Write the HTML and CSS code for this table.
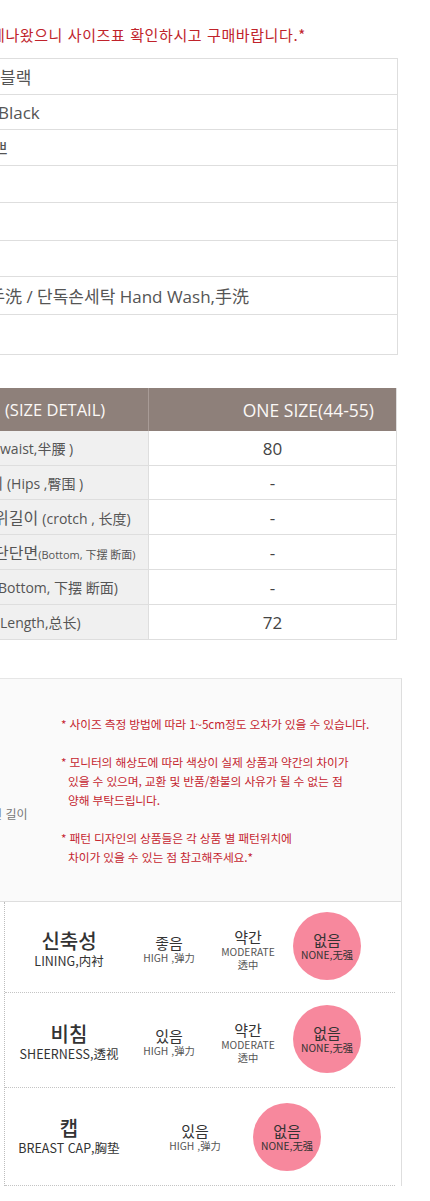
FILE: index.html
```html
<!DOCTYPE html>
<html lang="ko">
<head>
<meta charset="utf-8">
<title>Size detail</title>
<link rel="stylesheet" href="styles.css">
</head>
<body>
<div class="page">
  <p class="warn">게나왔으니 사이즈표 확인하시고 구매바랍니다.*</p>

  <div class="info">
    <div class="info-row"><span>블랙</span></div>
    <div class="info-row"><span class="cut2">Black</span></div>
    <div class="info-row"><span class="cut-big">쁘</span></div>
    <div class="info-row"></div>
    <div class="info-row"></div>
    <div class="info-row"></div>
    <div class="info-row"><span class="cut-wash">手洗 / 단독손세탁 Hand Wash,手洗</span></div>
    <div class="info-row"></div>
  </div>

  <div class="size">
    <div class="size-head">
      <div class="sh-left">(SIZE DETAIL)</div>
      <div class="sh-right">ONE SIZE(44-55)</div>
    </div>
    <div class="size-row">
      <div class="sr-left"><span class="t14">waist,半腰 )</span></div>
      <div class="sr-val">80</div>
    </div>
    <div class="size-row">
      <div class="sr-left"><span class="ko-cut k15">레</span> <span class="t14">(Hips ,臀围 )</span></div>
      <div class="sr-val">-</div>
    </div>
    <div class="size-row">
      <div class="sr-left"><span class="ko-cut">위</span><span class="k16">길이</span> <span class="t14">(crotch , 长度)</span></div>
      <div class="sr-val">-</div>
    </div>
    <div class="size-row">
      <div class="sr-left"><span class="ko-cut">단</span><span class="k16">단면</span><span class="t11">(Bottom, 下摆 断面)</span></div>
      <div class="sr-val">-</div>
    </div>
    <div class="size-row">
      <div class="sr-left"><span class="t14 cut-b">Bottom, 下摆 断面)</span></div>
      <div class="sr-val">-</div>
    </div>
    <div class="size-row">
      <div class="sr-left"><span class="t14">Length,总长)</span></div>
      <div class="sr-val">72</div>
    </div>
  </div>

  <div class="guide">
    <div class="notice">
      <div class="notice-side"><span class="side-label">선 길이</span></div>
      <div class="notes">
        <p>* 사이즈 측정 방법에 따라 1~5cm정도 오차가 있을 수 있습니다.</p>
        <p>* 모니터의 해상도에 따라 색상이 실제 상품과 약간의 차이가<br><span class="ind">있을 수 있으며, 교환 및 반품/환불의 사유가 될 수 없는 점</span><br><span class="ind">양해 부탁드립니다.</span></p>
        <p>* 패턴 디자인의 상품들은 각 상품 별 패턴위치에<br><span class="ind">차이가 있을 수 있는 점 참고해주세요.*</span></p>
      </div>
    </div>

    <div class="rating">
      <div class="rating-body">
        <div class="rate-row r1">
          <div class="label"><div class="l-ko">신축성</div><div class="l-en">LINING,内衬</div></div>
          <div class="opt"><div class="o-ko">좋음</div><div class="o-en">HIGH ,弹力</div></div>
          <div class="opt"><div class="o-ko">약간</div><div class="o-en">MODERATE</div><div class="o-en">透中</div></div>
          <div class="opt"><div class="dot"><div class="o-ko">없음</div><div class="o-en">NONE,无强</div></div></div>
        </div>
        <div class="rate-row r2">
          <div class="label"><div class="l-ko">비침</div><div class="l-en">SHEERNESS,透视</div></div>
          <div class="opt"><div class="o-ko">있음</div><div class="o-en">HIGH ,弹力</div></div>
          <div class="opt"><div class="o-ko">약간</div><div class="o-en">MODERATE</div><div class="o-en">透中</div></div>
          <div class="opt"><div class="dot"><div class="o-ko">없음</div><div class="o-en">NONE,无强</div></div></div>
        </div>
        <div class="rate-row r3">
          <div class="label"><div class="l-ko">캡</div><div class="l-en">BREAST CAP,胸垫</div></div>
          <div class="opt opt-wide"><div class="o-ko">있음</div><div class="o-en">HIGH ,弹力</div></div>
          <div class="opt"><div class="dot"><div class="o-ko">없음</div><div class="o-en">NONE,无强</div></div></div>
        </div>
      </div>
    </div>
  </div>
</div>
</body>
</html>
```

FILE: styles.css
```css
* { box-sizing: border-box; }

html, body {
  margin: 0;
  padding: 0;
  background: #fff;
}

body {
  font-family: "Noto Sans CJK KR", sans-serif;
  color: #333;
}

.page {
  width: 430px;
  overflow: hidden;
  padding-bottom: 20px;
}

/* top warning */
.warn {
  margin: 25px 0 0;
  font-size: 15px;
  line-height: 20px;
  letter-spacing: 0.6px;
  color: #c0232b;
  white-space: nowrap;
  text-indent: -9px;
}

/* info table */
.info {
  margin-top: 13px;
  width: 398px;
  border-top: 1px solid #dedede;
  border-right: 1px solid #dedede;
}
.info-row {
  display: flex;
  align-items: center;
  border-bottom: 1px solid #dedede;
  font-family: "Open Sans", "Noto Sans CJK KR", sans-serif;
  font-size: 17px;
  color: #555;
  white-space: nowrap;
  overflow: hidden;
}
.info-row:nth-child(1) { height: 36px; }
.info-row:nth-child(2) { height: 35px; }
.info-row:nth-child(3) { height: 36px; }
.info-row:nth-child(4) { height: 37px; }
.info-row:nth-child(5) { height: 38px; }
.info-row:nth-child(6) { height: 36px; }
.info-row:nth-child(7) { height: 38px; }
.info-row:nth-child(8) { height: 40px; }

.cut2 { margin-left: -2px; }
.cut-big { margin-left: -8px; }
.cut-wash { margin-left: -12px; letter-spacing: 0; }

/* size table */
.size {
  margin-top: 33px;
  width: 397px;
  border-right: 1px solid #dedede;
  font-family: "Open Sans", "Noto Sans CJK KR", sans-serif;
}
.size-head {
  display: grid;
  grid-template-columns: 149px 1fr;
  height: 43px;
  background: #8e807a;
  color: #fbf8f6;
  font-size: 16.5px;
}
.sh-left {
  display: flex;
  align-items: center;
  padding-left: 5px;
  border-right: 1px solid #a89b96;
  white-space: nowrap;
}
.sh-right {
  display: flex;
  align-items: center;
  justify-content: flex-end;
  padding-right: 22px;
  white-space: nowrap;
  font-size: 17.5px;
}
.size-row {
  display: grid;
  grid-template-columns: 149px 1fr;
  height: 35px;
  border-bottom: 1px solid #dedede;
}
.size-row:nth-child(3) { height: 34px; }
.sr-left {
  display: block;
  line-height: 34px;
  background: #f0f0f0;
  border-right: 1px solid #dedede;
  color: #555;
  white-space: nowrap;
  overflow: hidden;
}
.sr-val {
  display: flex;
  align-items: center;
  justify-content: center;
  font-size: 17px;
  color: #444;
}
.t14 { font-size: 14px; }
.t11 { font-size: 11px; }
.k16 { font-family: "Noto Sans CJK KR", sans-serif; font-size: 16px; }
.ko-cut {
  display: inline-block;
  font-family: "Noto Sans CJK KR", sans-serif;
  font-size: 16px;
  margin-left: -6px;
}
.ko-cut.k15 { font-size: 15px; margin-left: -11px; }
.cut-b { margin-left: -2px; }

/* guide */
.guide {
  margin-top: 38px;
  width: 402px;
}
.notice {
  display: flex;
  height: 224px;
  background: #fafafa;
  border-top: 1px solid #e6e6e6;
  border-right: 1px solid #dedede;
  border-bottom: 1px solid #dedede;
}
.notice-side {
  width: 61px;
  flex: none;
  padding-top: 125px;
  overflow: hidden;
}
.side-label {
  display: block;
  font-size: 12px;
  line-height: 19px;
  color: #777;
  white-space: nowrap;
  margin-left: -9px;
}
.notes {
  padding-top: 35px;
  font-size: 11.8px;
  line-height: 19px;
  color: #c52630;
  letter-spacing: -0.15px;
  white-space: nowrap;
}
.notes p { margin: 0 0 19px; }
.ind { padding-left: 7px; }

/* rating */
.rating {
  border-right: 1px solid #dedede;
  padding: 0 6px 0 4px;
}
.rating-body {
  border-left: 1px dotted #bdbdbd;
}
.rate-row {
  display: grid;
  grid-template-columns: 128px 72px 86px 72px;
  align-items: center;
  border-bottom: 1px dotted #c4c4c4;
}
.rate-row.r1 { height: 91px; padding-top: 4px; }
.rate-row.r2 { height: 95px; padding-top: 4px; }
.rate-row.r3 { height: 98px; grid-template-columns: 128px 118px 72px; }

.label { text-align: center; }
.l-ko {
  font-size: 20px;
  line-height: 22px;
  font-weight: 500;
  color: #333;
}
.l-en {
  font-size: 12.5px;
  line-height: 17px;
  font-weight: 400;
  color: #333;
  white-space: nowrap;
}
.opt {
  display: flex;
  flex-direction: column;
  align-items: center;
  text-align: center;
}
.opt-wide { padding-left: 6px; }
.o-ko {
  font-size: 15px;
  line-height: 17px;
  color: #333;
}
.o-en {
  font-size: 10.3px;
  line-height: 13px;
  color: #555;
  white-space: nowrap;
}
.dot {
  width: 68px;
  height: 68px;
  border-radius: 50%;
  background: #f7889d;
  display: flex;
  flex-direction: column;
  align-items: center;
  justify-content: center;
}
.rate-row.r1 .dot, .rate-row.r2 .dot { margin-top: -6px; }
.dot .o-en { color: #333; }
```
